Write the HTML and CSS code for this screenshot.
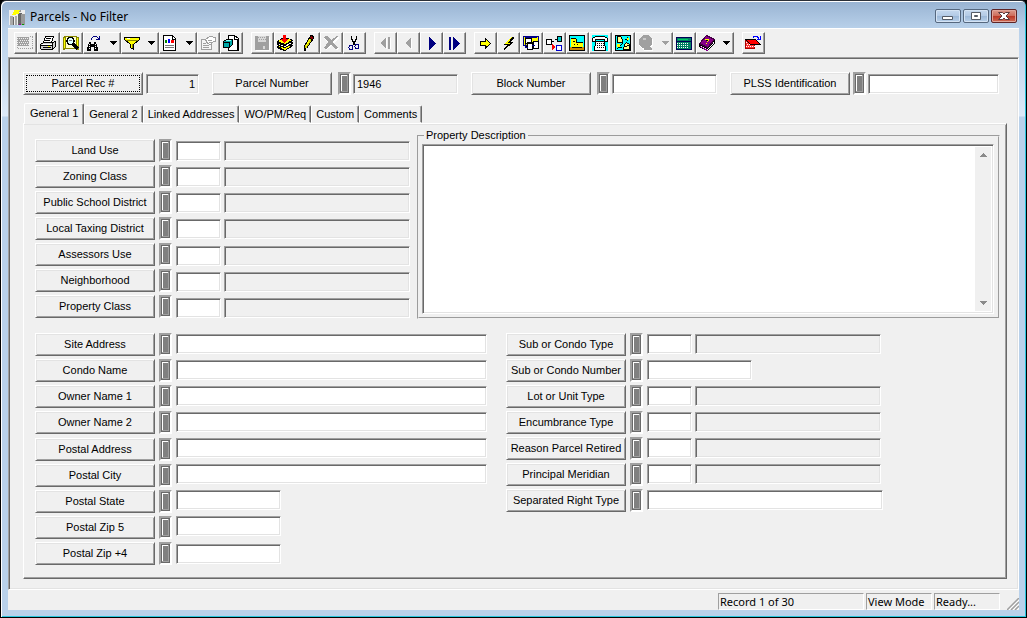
FILE: index.html
```html
<!DOCTYPE html>
<html lang="en">
<head>
<meta charset="utf-8">
<title>Parcels - No Filter</title>
<link rel="stylesheet" href="styles.css">
</head>
<body>
<div class="window">
  <header class="titlebar">
    <svg class="app-icon" viewBox="0 0 17 17"><path fill="#eee" d="M0 1h16v15H0z"/><path fill="#aaa" d="M1 7h3v9H1zM6 7h2v9H6z"/><path fill="#666" d="M9 4h4v12H9zM4 8h1v8H4z"/><path fill="#999" d="M12 5h4v11h-4zM9 1h3v2H9z"/><path fill="#ff0" d="M5 1h6v1h-1v3H7v1H3V5h1V3h1z"/><path fill="#909" d="M10 15h2v1h-2z"/><path fill="#090" d="M13 15h2v1h-2z"/></svg>
    <h1 class="title">Parcels - No Filter</h1>
    <button class="winbtn" type="button" aria-label="Minimize"><svg viewBox="0 0 24 12"><path fill="#fff" stroke="#555b66" d="M6.500 6.500h10v3h-10z"/></svg></button>
    <button class="winbtn" type="button" aria-label="Maximize"><svg viewBox="0 0 24 12"><path fill="#fff" stroke="#555b66" d="M7.500 2.500h9v7h-9z"/><path fill="#9ab" stroke="#555b66" d="M10.500 5.500h3v1h-3z"/></svg></button>
    <button class="winbtn winbtn-close" type="button" aria-label="Close"><svg viewBox="0 0 24 12"><path fill="#fff" stroke="#5c3a3c" d="M6.500 2.500h4l1.500 1.500 1.500-1.500h4L14 6l3.500 3.500h-4L12 8l-1.500 1.500h-4L10 6z"/></svg></button>
  </header>

  <nav class="toolbar" aria-label="Toolbar">
    <div class="tools">
      <button class="tool" type="button" aria-label="Form view"><svg viewBox="0 0 16 16"><path fill="#a0a0a0" d="M1 2h11v9H1z"/><path stroke="#efefef" stroke-dasharray="1 1" d="M2 3.500h9M3 5.500h9M2 7.500h9M3 9.500h9"/><path fill="none" stroke="#a0a0a0" stroke-dasharray="1 1" d="M13 1.500h3M15.500 2v12M1 13.500h15M.5 2v12"/></svg></button>
      <button class="tool" type="button" aria-label="Print"><svg viewBox="0 0 16 16"><path fill="#fff" stroke="#000" d="M5.500 1.500h8l-2 6h-8z"/><path stroke="#000" d="M6 3.500h5M5 5.500h5"/><path fill="#ccc" stroke="#000" d="M3.500 7.500h9l3-1v5l-3 3h-11l-1-1v-4z"/><path stroke="#000" d="M1 10.500h11M12.500 8v6M3 12.500h8"/><path fill="#fff" d="M2 9h10v1H2z"/><path fill="#ff0" d="M8 11h2v1H8z"/></svg></button>
      <button class="tool" type="button" aria-label="Print preview"><svg viewBox="0 0 16 16"><path fill="#ff0" stroke="#880" d="M.5 2.500l2-1v12l-2 1zM12.500 1.500l3 1v12l-3-1z"/><path fill="#ffc" stroke="#880" d="M2.500 1.500h11v12h-11z"/><circle cx="7.500" cy="6" r="3.500" fill="#dff" stroke="#000" stroke-width="1.500"/><path stroke="#000" stroke-width="3" d="M10 9l5 5"/><path stroke="#777" d="M6 5.500h3"/></svg></button>
      <button class="tool tool-drop" type="button" aria-label="Find"><svg viewBox="0 0 16 16"><path fill="#000" d="M3 7h2v2h3V7h2v2h1v3h1v4H8v-4H5v4H1v-4h1V9h1z"/><path stroke="#fff" stroke-dasharray="1 1" d="M3.500 9v6M9.500 9v6"/><path fill="none" stroke="#000080" stroke-width="1" d="M5.500 5V3.500l2-2h3l3 3M10 4.500h3.500V1"/></svg><svg class="arrow" viewBox="0 0 7 4"><path d="M0 0h7v1H6v1H5v1H4v1H3V3H2V2H1V1H0z"/></svg></button>
      <button class="tool tool-drop" type="button" aria-label="Filter"><svg viewBox="0 0 16 16"><path fill="#ff0" stroke="#000" d="M.5 2.500h15v2l-6 5v5l-3-2v-3l-6-5z"/><path fill="#fff" d="M3 3h3v1H3z"/><path fill="#880" d="M2 5h12v1H2zM8 9h1v4H8z"/></svg><svg class="arrow" viewBox="0 0 7 4"><path d="M0 0h7v1H6v1H5v1H4v1H3V3H2V2H1V1H0z"/></svg></button>
      <button class="tool tool-drop" type="button" aria-label="Reports"><svg viewBox="0 0 16 16"><path fill="#fff" stroke="#000" d="M1.500.5h9l3 3v12h-12z"/><path fill="none" stroke="#000" d="M10.500 1v3H14"/><path fill="#080" d="M3 5h2v3H3z"/><path fill="#00f" d="M6 4h2v4H6z"/><path fill="#f00" d="M9 5h3v3H9z"/><path stroke="#777" d="M3 10.500h9M3 12.500h9"/></svg><svg class="arrow" viewBox="0 0 7 4"><path d="M0 0h7v1H6v1H5v1H4v1H3V3H2V2H1V1H0z"/></svg></button>
      <button class="tool" type="button" aria-label="Properties"><svg viewBox="0 0 16 16"><path fill="#f6f6f6" stroke="#a0a0a0" d="M1.500 4.500h10v10h-10z"/><path stroke="#a0a0a0" d="M3 8.500h3M3 10.500h6M3 12.500h6"/><path fill="#fff" stroke="#a0a0a0" d="M5.500 4.500l4-3h3l1 1h2v4h-2l-3 3-3-1z"/><path stroke="#a0a0a0" d="M8 5.500h4M9 7.500h3"/></svg></button>
      <button class="tool" type="button" aria-label="Copy record"><svg viewBox="0 0 16 16"><path fill="#fff" stroke="#000" d="M5.500.5h6l4 3v12h-10z"/><path fill="none" stroke="#000" d="M11.500 1v3H15M14.500 4v11"/><path fill="#0aa" stroke="#000" d="M.5 6.500l3-2h6v5l-3 3h-6z"/><path fill="#8ff" d="M3 5h5v1H3z"/><path stroke="#000" d="M1 7.500h6M6.500 7v5"/></svg></button>
    </div>
    <div class="tools">
      <button class="tool" type="button" aria-label="Save"><svg viewBox="0 0 16 16"><path fill="#fff" d="M2 2h14v14H2z"/><path fill="#a0a0a0" d="M1 1h14v14H1z"/><path fill="#d8d8d8" d="M4 1h8v6H4zM9 11h2v3H9z"/><path stroke="#a0a0a0" stroke-dasharray="1 1" d="M4 2.500h8M5 4.500h8"/></svg></button>
      <button class="tool" type="button" aria-label="Add record"><svg viewBox="0 0 16 16"><path fill="#000" d="M0 11l6-3 10 2v1l-8 5h-1l-7-3z"/><path fill="#ff0" d="M1 11l6-2 7 2-6 4z"/><path fill="#000" d="M0 8l6-3 10 2v2l-8 4h-1l-7-3z"/><path fill="#fff" d="M1 9l6-2 8 1-7 4z"/><path fill="#000" d="M0 6l7-4 9 3v1l-8 5h-1L0 8z"/><path fill="#ff0" d="M1 6l6-3 8 2-7 4z"/><path fill="#f00" d="M6 0h3v4h2L7.500 8 4 4h2z"/></svg></button>
      <button class="tool" type="button" aria-label="Edit record"><svg viewBox="0 0 16 16"><path fill="#cc0" stroke="#000" d="M9.500 2.500l3 2-6 9-2 1.500v-4z"/><path fill="#800" stroke="#000" d="M10.500.5h2l1 2-1 2.500-3-2z"/><path stroke="#ff0" d="M6 11l4-7"/><path fill="#000" d="M4 13h2v3H4z"/></svg></button>
      <button class="tool" type="button" aria-label="Delete record"><svg viewBox="0 0 16 16"><path fill="#fff" d="M1 3l4-1 4 4 6-4 1 1-5 5 5 6-2 1-5-4-6 4-1-2 4-4z"/><path fill="#a0a0a0" d="M0 2l4-1 4 4 6-4h1l-5 6 5 6-3 1-4-4-5 4-2-1 4-6z"/></svg></button>
      <button class="tool" type="button" aria-label="Cut"><svg viewBox="0 0 16 16"><path stroke="#000" d="M5.500 1v3l3.500 6M10.500 1v3L7 10"/><circle cx="5" cy="12.500" r="2" fill="none" stroke="#000080"/><circle cx="11" cy="11.500" r="2" fill="none" stroke="#000080"/></svg></button>
    </div>
    <div class="tools">
      <button class="tool" type="button" aria-label="First record"><svg viewBox="0 0 16 16"><path fill="#fff" d="M10 3v11L4 8.500zM12 3h2v11h-2z"/><path fill="#a0a0a0" d="M9 2v12L3 8zM11 2h2v12h-2z"/></svg></button>
      <button class="tool" type="button" aria-label="Previous record"><svg viewBox="0 0 16 16"><path fill="#fff" d="M12 3v12L6 9z"/><path fill="#a0a0a0" d="M11 2v12L5 8z"/></svg></button>
      <button class="tool" type="button" aria-label="Next record"><svg viewBox="0 0 16 16"><path fill="#000080" d="M6 2v13l7-6.500z"/></svg></button>
      <button class="tool" type="button" aria-label="Last record"><svg viewBox="0 0 16 16"><path fill="#000080" d="M3 2h2v13H3zM7 2v13l7-6.500z"/></svg></button>
    </div>
    <div class="tools">
      <button class="tool" type="button" aria-label="Go to"><svg viewBox="0 0 16 16"><path fill="#ff0" stroke="#000" d="M3.500 6.500h5v-3l5 5-5 4.500v-3h-5z"/></svg></button>
      <button class="tool" type="button" aria-label="Quick action"><svg viewBox="0 0 16 16"><path fill="#000" d="M13 2l1 1-4 4h3v1l-9 7-1-1 4-4H4V9z"/><path fill="#ff0" d="M12 2L5 8v1h4l-5 5 7-6H8z"/></svg></button>
      <button class="tool" type="button" aria-label="Views"><svg viewBox="0 0 16 16"><path fill="#ff0" stroke="#008" d="M.5 1.500h15v9H.500z"/><path fill="#fff" stroke="#000" d="M2.500 3.500h6v5h-6zM4.500 7.500h5v7h-5zM10.500 6.500h5v7h-5z"/><path stroke="#008" d="M2 2.500h12M9 10.500h3M2.500 9v3h2"/></svg></button>
      <button class="tool" type="button" aria-label="Links"><svg viewBox="0 0 16 16"><path fill="#fff" stroke="#000" d="M.5 4.500h5v5h-5z"/><path fill="#0cc" stroke="#000" d="M11.500 1.500h4v5h-4z"/><path fill="#fff" stroke="#00c" d="M10.500 10.500h5v5h-5z"/><path stroke="#000" d="M6 6.500h2M9 4.500h2"/><path fill="#f00" d="M6 9v6l4-3z"/></svg></button>
      <button class="tool" type="button" aria-label="Equipment"><svg viewBox="0 0 16 16"><path fill="#0ff" stroke="#000" d="M.5.5h15v15H.500z"/><path fill="#ff0" d="M2 4h5v4h7v4H2z"/><path stroke="#000" d="M2 3.500h5M7.500 4v4M8 7.500h6M4 6.500h2M5 9.500h1M8 9.500h1"/><path fill="#c80" d="M1 12h14v3H1z"/><path stroke="#000" d="M3 12.500h10"/></svg></button>
      <button class="tool" type="button" aria-label="Phone"><svg viewBox="0 0 16 16"><path fill="#0ff" d="M0 0h16v16H0z"/><path fill="#fff" stroke="#000" d="M.5 3.500l3-2h9l3 2v3h-3v-2h-9v2h-3zM3.500 6.500h9l1 8.500h-11z"/><path stroke="#000" stroke-dasharray="1 1" d="M5 8.500h7M5 10.500h7M5 12.500h7"/></svg></button>
      <button class="tool" type="button" aria-label="Map"><svg viewBox="0 0 16 16"><path fill="#0ff" stroke="#000" d="M.5.5h15v15H.500z"/><path fill="#ff8" stroke="#000" d="M2.500 1.500h3l2 3v3h-5zM9.500 9.500l2-2 3 2v5h-6z"/><path stroke="#000" d="M2 14l6-6M12 2v4M10 4h4"/><path fill="#ff0" d="M2 9h3v3H2zM12 3h2v2h-2z"/><path stroke="#000" d="M10 12l4-2M3 12.500h4"/></svg></button>
      <button class="tool tool-drop" type="button" aria-label="World view"><svg viewBox="0 0 17 16"><path fill="#fff" d="M6 1h7l3 4v6l-2 2 2 3H6l-5-5V5z"/><path fill="#a0a0a0" d="M5 0h7l3 4v6l-2 2 2 2v1H6v-2H4l-3-3V4z"/><path fill="#c8c8c8" d="M5 3h3v2H5z"/></svg><svg class="arrow arrow-off" viewBox="0 0 7 4"><path d="M0 0h7v1H6v1H5v1H4v1H3V3H2V2H1V1H0z"/></svg></button>
      <button class="tool" type="button" aria-label="Calculator"><svg viewBox="0 0 16 16"><path fill="#008060" stroke="#005" d="M.5 2.500h15v12H.500z"/><path fill="#0c6" d="M2 4h10v1H2z"/><path stroke="#fff" stroke-dasharray="1 1" d="M1 8.500h12M1 10.500h12M1 12.500h12"/><path stroke="#005" d="M1 6.500h14"/></svg></button>
      <button class="tool tool-drop" type="button" aria-label="Help"><svg viewBox="0 0 16 16"><path fill="#fff" stroke="#000" d="M.5 9.500l8 4 7-8v3l-7 7-8-4z"/><path fill="#808" stroke="#404" d="M.5 8.500L7.500.5l8 4-7 8z"/><path fill="#808" d="M1 12l7 4 1-1-8-4z"/><path stroke="#ff0" d="M6 5l3-1 1 1-2 2M7 8v1"/></svg><svg class="arrow" viewBox="0 0 7 4"><path d="M0 0h7v1H6v1H5v1H4v1H3V3H2V2H1V1H0z"/></svg></button>
    </div>
    <div class="tools">
      <button class="tool" type="button" aria-label="Exit"><svg viewBox="0 0 16 16"><path fill="#f33" stroke="#a00" d="M.5 5.500h9v8h-9z"/><path stroke="#fff" stroke-dasharray="1 1" d="M1 7.500h5M2 9.500h7M1 11.500h9"/><path fill="#f00" stroke="#000" d="M.5 4.500h10l5 5h-10z"/><path fill="none" stroke="#00f" d="M8 2.500l1-1h3l2 2M12 4.500h3V1"/></svg></button>
    </div>
  </nav>

  <main class="client">
    <div class="keys">
      <div class="key"><button class="btn btn-focus" type="button" id="rec">Parcel Rec #</button><input class="field field-locked field-rec" aria-labelledby="rec" value="1" readonly></div>
      <div class="key"><button class="btn" type="button" id="num">Parcel Number</button><span class="lamp"></span><input class="field field-locked field-short" aria-labelledby="num" value="1946" readonly></div>
      <div class="key"><button class="btn" type="button" id="block">Block Number</button><span class="lamp"></span><input class="field field-short" aria-labelledby="block"></div>
      <div class="key key-tight"><button class="btn" type="button" id="plss">PLSS Identification</button><span class="lamp"></span><input class="field field-plss" aria-labelledby="plss"></div>
    </div>

    <div class="tabs" role="tablist">
      <button class="tab tab-active" type="button" role="tab" aria-selected="true">General 1</button>
      <button class="tab" type="button" role="tab">General 2</button>
      <button class="tab" type="button" role="tab">Linked Addresses</button>
      <button class="tab" type="button" role="tab">WO/PM/Req</button>
      <button class="tab" type="button" role="tab">Custom</button>
      <button class="tab" type="button" role="tab">Comments</button>
    </div>

    <section class="panel" role="tabpanel">
      <div class="upper">
        <div class="rows rows-upper">
          <div class="row"><button class="btn" type="button" id="land">Land Use</button><span class="lamp"></span><input class="field field-code" aria-labelledby="land"><input class="field field-locked field-desc" aria-labelledby="land" readonly></div>
          <div class="row"><button class="btn" type="button" id="zoning">Zoning Class</button><span class="lamp"></span><input class="field field-code" aria-labelledby="zoning"><input class="field field-locked field-desc" aria-labelledby="zoning" readonly></div>
          <div class="row"><button class="btn" type="button" id="school">Public School District</button><span class="lamp"></span><input class="field field-code" aria-labelledby="school"><input class="field field-locked field-desc" aria-labelledby="school" readonly></div>
          <div class="row"><button class="btn" type="button" id="taxing">Local Taxing District</button><span class="lamp"></span><input class="field field-code" aria-labelledby="taxing"><input class="field field-locked field-desc" aria-labelledby="taxing" readonly></div>
          <div class="row row-low"><button class="btn" type="button" id="assessors">Assessors Use</button><span class="lamp"></span><input class="field field-code" aria-labelledby="assessors"><input class="field field-locked field-desc" aria-labelledby="assessors" readonly></div>
          <div class="row row-low"><button class="btn" type="button" id="hood">Neighborhood</button><span class="lamp"></span><input class="field field-code" aria-labelledby="hood"><input class="field field-locked field-desc" aria-labelledby="hood" readonly></div>
          <div class="row row-low"><button class="btn" type="button" id="class">Property Class</button><span class="lamp"></span><input class="field field-code" aria-labelledby="class"><input class="field field-locked field-desc" aria-labelledby="class" readonly></div>
        </div>
        <fieldset class="group">
          <legend>Property Description</legend>
          <div class="memo">
            <textarea aria-label="Property Description"></textarea>
            <div class="rail"><svg viewBox="0 0 7 4"><path d="M3 0h1v1h1v1h1v1h1v1H0V3h1V2h1V1h1z"/></svg><svg viewBox="0 0 7 4"><path d="M0 0h7v1H6v1H5v1H4v1H3V3H2V2H1V1H0z"/></svg></div>
          </div>
        </fieldset>
      </div>

      <div class="lower">
        <div class="stack">
          <div class="rows">
            <div class="row"><button class="btn" type="button" id="site">Site Address</button><span class="lamp"></span><input class="field field-long" aria-labelledby="site"></div>
            <div class="row"><button class="btn" type="button" id="condo">Condo Name</button><span class="lamp"></span><input class="field field-long" aria-labelledby="condo"></div>
            <div class="row"><button class="btn" type="button" id="owner1">Owner Name 1</button><span class="lamp"></span><input class="field field-long" aria-labelledby="owner1"></div>
            <div class="row"><button class="btn" type="button" id="owner2">Owner Name 2</button><span class="lamp"></span><input class="field field-long" aria-labelledby="owner2"></div>
          </div>
          <div class="rows">
            <div class="row row-high"><button class="btn" type="button" id="postal">Postal Address</button><span class="lamp"></span><input class="field field-long" aria-labelledby="postal"></div>
            <div class="row row-high"><button class="btn" type="button" id="city">Postal City</button><span class="lamp"></span><input class="field field-long" aria-labelledby="city"></div>
            <div class="row row-high"><button class="btn" type="button" id="state">Postal State</button><span class="lamp"></span><input class="field field-short" aria-labelledby="state"></div>
            <div class="row row-high"><button class="btn" type="button" id="zip5">Postal Zip 5</button><span class="lamp"></span><input class="field field-short" aria-labelledby="zip5"></div>
            <div class="row row-low"><button class="btn" type="button" id="zip4">Postal Zip +4</button><span class="lamp"></span><input class="field field-short" aria-labelledby="zip4"></div>
          </div>
        </div>
        <div class="rows">
          <div class="row"><button class="btn" type="button" id="subtype">Sub or Condo Type</button><span class="lamp"></span><input class="field field-code" aria-labelledby="subtype"><input class="field field-locked field-desc" aria-labelledby="subtype" readonly></div>
          <div class="row"><button class="btn" type="button" id="subnum">Sub or Condo Number</button><span class="lamp"></span><input class="field field-short" aria-labelledby="subnum"></div>
          <div class="row"><button class="btn" type="button" id="lot">Lot or Unit Type</button><span class="lamp"></span><input class="field field-code" aria-labelledby="lot"><input class="field field-locked field-desc" aria-labelledby="lot" readonly></div>
          <div class="row"><button class="btn" type="button" id="enc">Encumbrance Type</button><span class="lamp"></span><input class="field field-code" aria-labelledby="enc"><input class="field field-locked field-desc" aria-labelledby="enc" readonly></div>
          <div class="row"><button class="btn" type="button" id="reason">Reason Parcel Retired</button><span class="lamp"></span><input class="field field-code" aria-labelledby="reason"><input class="field field-locked field-desc" aria-labelledby="reason" readonly></div>
          <div class="row"><button class="btn" type="button" id="meridian">Principal Meridian</button><span class="lamp"></span><input class="field field-code" aria-labelledby="meridian"><input class="field field-locked field-desc" aria-labelledby="meridian" readonly></div>
          <div class="row"><button class="btn" type="button" id="right">Separated Right Type</button><span class="lamp"></span><input class="field field-right" aria-labelledby="right"></div>
        </div>
      </div>
    </section>
  </main>

  <footer class="status">
    <span class="cell cell-record">Record 1 of 30</span>
    <span class="cell">View Mode</span>
    <span class="cell">Ready...</span>
    <svg class="grip" viewBox="0 0 12 12"><path stroke="#fff" d="M2 12L12 2M6 12l6-6M10 12l2-2"/><path stroke="#a0a0a0" stroke-width="1.500" d="M0 12L12 0M4 12l8-8M8 12l4-4"/></svg>
  </footer>
</div>
</body>
</html>
```

FILE: styles.css
```css
* { box-sizing: border-box; }

body {
  margin: 0;
  background: #000;
  color: #000;
  font: 11px/13px "Liberation Sans", Arial, sans-serif;
}

button, input, textarea {
  font: inherit;
  color: inherit;
  margin: 0;
  border-radius: 0;
}

button { padding: 0; background: #f0f0f0; }

svg { display: block; }

/* Window frame */
.window {
  display: flex;
  flex-direction: column;
  min-height: 100vh;
  padding: 0 7px 7px 6px;
  border: 1px solid #000;
  border-top-color: #2a2f38;
  border-radius: 6px 6px 0 0;
  box-shadow: inset 1px 1px #fff, inset -1px -1px #29c5dc;
  background:
    linear-gradient(#98b3d2, #b9d1ea 28px, #dce9f7 115px, #b9d1ea 116px);
}

.titlebar {
  display: flex;
  align-items: center;
  gap: 2px;
  height: 27px;
  padding: 5px 2px 0;
}

.app-icon { width: 17px; height: 17px; }

.title {
  flex: 1;
  margin: 0 0 0 2px;
  font: 12px/16px "Noto Sans", "Open Sans", sans-serif;
}

.winbtn {
  width: 26px;
  height: 14px;
  margin-bottom: 2px;
  border: 1px solid #56687f;
  border-radius: 2px;
  background: linear-gradient(#c5d8ee, #b3cae5 50%, #9cb8d8 51%, #b8d0ea);
  box-shadow: inset 0 0 0 1px #d4e3f4;
}

.winbtn svg { width: 24px; height: 12px; }

.winbtn-close {
  border-color: #5e2426;
  background: linear-gradient(#dc9a8c, #cd6a58 50%, #b93624 51%, #cf6b55);
  box-shadow: inset 0 0 0 1px #e0a59a;
}

/* Toolbar */
.toolbar {
  display: flex;
  flex-wrap: wrap;
  gap: 8px;
  margin-left: 1px;
  padding: 3px 6px;
  border-top: 1px solid #fff;
  background: #f0f0f0;
}

.tools { display: flex; }

.tool {
  display: flex;
  align-items: center;
  width: 23px;
  height: 22px;
  padding: 0 2px;
  border: 1px solid;
  border-color: #fff #696969 #696969 #fff;
  box-shadow: inset -1px -1px #a0a0a0;
}

.tool svg { flex: none; width: 16px; height: 16px; shape-rendering: crispEdges; }
.tool-drop { width: 38px; }
.tool .arrow { width: 7px; height: 4px; margin-left: 8px; }
.tool .arrow-off { fill: #a0a0a0; }

/* Client area */
.client {
  flex: 1;
  display: flex;
  flex-direction: column;
  margin-left: 1px;
  padding: 14px 11px 10px 14px;
  border: 1px solid;
  border-color: #a0a0a0 #fff #fff #a0a0a0;
  box-shadow: inset 1px 1px #696969, inset -1px -1px #e3e3e3;
  background: #f0f0f0;
}

.keys { display: flex; gap: 13px; }
.key, .row { display: flex; align-items: center; }

.btn {
  flex: none;
  width: 120px;
  height: 23px;
  border: 1px solid;
  border-color: #fff #696969 #696969 #fff;
  box-shadow: inset 1px 1px #e3e3e3, inset -1px -1px #a0a0a0;
}

.btn-focus {
  outline: 1px dotted #000;
  outline-offset: -4px;
}

.lamp {
  flex: none;
  width: 13px;
  height: 23px;
  border: 2px solid;
  border-color: #a0a0a0 #fff #fff #a0a0a0;
  background: #808080;
  box-shadow: inset 0 0 0 1px #696969, inset -2px -2px #a0a0a0, inset 2px 2px #fff;
}

.key .lamp { margin: 0 2px 0 6px; }
.key-tight .lamp { margin-left: 3px; }
.row .lamp { margin: 0 4px; }

.field {
  height: 20px;
  padding: 0 3px;
  border: 1px solid;
  border-color: #a0a0a0 #fff #fff #a0a0a0;
  box-shadow: inset 1px 1px #696969, inset -1px -1px #e3e3e3;
  background: #fff;
}

.field-locked { background: #f0f0f0; }
.field-rec { width: 53px; margin-left: 3px; text-align: right; }
.field-short { width: 105px; }
.field-plss { width: 131px; }
.field-code { width: 45px; }
.field-desc { width: 186px; margin-left: 3px; }
.field-long { width: 311px; }
.field-right { width: 236px; }

/* Tabs */
.tabs {
  display: flex;
  align-items: flex-end;
  margin: 8px 0 0 1px;
}

.tab {
  height: 18px;
  padding: 1px 4px 0;
  border: 1px solid;
  border-color: #fff #696969 transparent #fff;
  border-radius: 2px 2px 0 0;
  box-shadow: inset -1px 0 #a0a0a0;
}

.tab-active {
  position: relative;
  height: 21px;
  margin-bottom: -1px;
  padding: 0 5px 2px;
  border-bottom: 0;
}

.panel {
  flex: 1;
  padding: 5px 6px 12px 11px;
  border: 1px solid;
  border-color: #fff #696969 #696969 #fff;
  box-shadow: inset 0 1px #e3e3e3, inset -1px -1px #a0a0a0;
}

.upper { display: flex; gap: 7px; }
.rows { display: flex; flex-direction: column; gap: 3px; }
.rows-upper { padding: 10px 0 1px; }
.row-low .field { align-self: flex-end; }
.row-high .field { align-self: flex-start; }
.lower .field { margin-bottom: 1px; }

.group {
  flex: 1;
  display: flex;
  min-width: 0;
  margin: 0;
  padding: 2px 4px 3px 3px;
  border: 2px groove #f0f0f0;
}

.group legend { margin-left: 2px; padding: 0 2px; }

.memo {
  flex: 1;
  display: flex;
  padding: 2px;
  border: 1px solid;
  border-color: #a0a0a0 #fff #fff #a0a0a0;
  box-shadow: inset 1px 1px #696969, inset -1px -1px #e3e3e3;
  background: #fff;
}

.memo textarea {
  flex: 1;
  min-width: 0;
  padding: 1px 2px;
  border: 0;
  resize: none;
  overflow: hidden;
  background: transparent;
}

.rail {
  display: flex;
  flex-direction: column;
  align-items: center;
  justify-content: space-between;
  width: 16px;
  padding: 6px 0;
  background: #f0f0f0;
  fill: #8a8a8a;
}

.rail svg { width: 7px; height: 4px; }

.lower { display: flex; gap: 19px; margin-top: 14px; }
.stack { display: flex; flex-direction: column; gap: 4px; }

/* Status bar */
.status {
  display: flex;
  justify-content: flex-end;
  gap: 2px;
  margin-left: 1px;
  padding-top: 3px;
  background: #f0f0f0;
  font: 11px/16px "Noto Sans", "Open Sans", sans-serif;
}

.cell {
  width: 66px;
  height: 17px;
  padding-left: 1px;
  border: 1px solid;
  border-color: #a0a0a0 #fff #fff #a0a0a0;
  line-height: 15px;
  white-space: nowrap;
}

.cell-record { width: 146px; }

.grip { width: 12px; height: 12px; margin: 5px 0 0 5px; }
```
